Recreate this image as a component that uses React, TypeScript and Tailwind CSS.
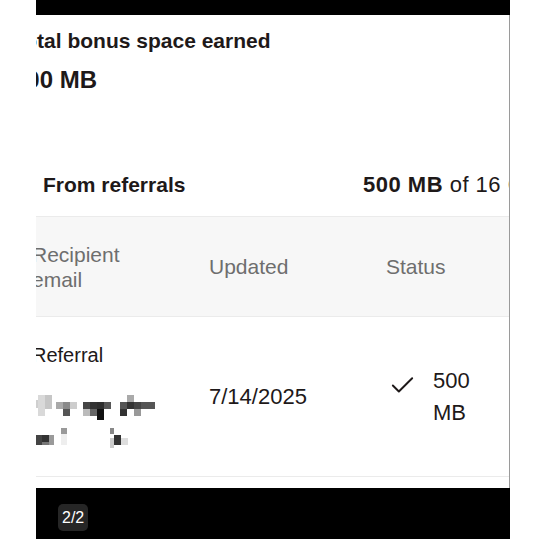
import { Check } from "lucide-react"

const font = { fontFamily: '"Liberation Sans", Arial, sans-serif' }

// pixelated (redacted) email, drawn as mosaic blocks
const blocks: [number, number, number, number, string][] = [
  [2, 8, 4, 8, "#cfcfcf"],
  [6, 3, 7, 21, "#d9d9d9"],
  [13, 3, 7, 14, "#c6c6c6"],
  [24, 10, 7, 7, "#a9a9a9"],
  [31, 10, 7, 7, "#8a8a8a"],
  [31, 17, 7, 7, "#555"],
  [38, 10, 7, 7, "#cdcdcd"],
  [51, 10, 7, 7, "#454545"],
  [58, 10, 7, 7, "#333"],
  [65, 10, 7, 7, "#2e2e2e"],
  [72, 10, 7, 7, "#575757"],
  [51, 17, 7, 7, "#bbb"],
  [58, 17, 7, 7, "#666"],
  [65, 17, 7, 11, "#111"],
  [88, 10, 7, 14, "#555"],
  [95, 3, 7, 7, "#aaa"],
  [95, 10, 7, 7, "#333"],
  [102, 10, 7, 7, "#444"],
  [109, 10, 14, 7, "#555"],
  [88, 17, 7, 7, "#333"],
  [102, 17, 7, 7, "#999"],
  [3, 43, 7, 10, "#444"],
  [10, 43, 7, 7, "#333"],
  [10, 50, 7, 3, "#777"],
  [17, 43, 5, 10, "#9a9a9a"],
  [29, 36, 6, 6, "#999"],
  [29, 42, 6, 11, "#eee"],
  [78, 36, 4, 6, "#888"],
  [82, 43, 7, 10, "#333"],
  [78, 46, 4, 10, "#ccc"],
  [89, 46, 7, 7, "#ddd"],
]

function Mosaic() {
  return (
    <svg width="130" height="60" viewBox="0 0 130 60" className="block blur-[0.5px]">
      {blocks.map(([x, y, w, h, c], i) => (
        <rect key={i} x={x} y={y} width={w} height={h} fill={c} />
      ))}
    </svg>
  )
}

export default function App() {
  return (
    <div className="w-[539px] h-[539px] bg-white flex overflow-hidden" style={font}>
      <div className="w-[36px] shrink-0" />
      <div className="w-[474px] shrink-0 flex flex-col">
        <div className="h-[15px] bg-black shrink-0" />
        <div className="flex-1 border-r border-[#9a9a9a] overflow-hidden text-[#1e1919]">
          <div className="ml-[-23px] w-[530px] pt-[12px]">
            <div className="text-[21px] font-bold leading-[28px] whitespace-nowrap">Total bonus space earned</div>
            <div className="mt-[9px] text-[24px] font-bold leading-[32px] whitespace-nowrap">500 MB</div>

            <div className="mt-[75px] pl-[30px] flex items-center leading-[28px] whitespace-nowrap">
              <div className="w-[320px] text-[21px] font-bold">From referrals</div>
              <div className="text-[22px] tracking-[0.5px]">
                <span className="font-bold">500 MB</span> of 16 GB
              </div>
            </div>

            <div className="mt-[17px] h-[101px] border-y border-[#ebebeb] bg-[#f7f7f7] pl-[19px] flex items-center text-[21px] text-[#6e6e6e] leading-[25px]">
              <div className="w-[177px]">
                Recipient
                <br />
                email
              </div>
              <div className="w-[177px]">Updated</div>
              <div>Status</div>
            </div>

            <div className="h-[160px] border-b border-[#ebebeb] pl-[19px] flex items-center text-[20px]">
              <div className="w-[177px] flex flex-col">
                <div className="leading-[28px]">Referral</div>
                <div className="mt-[23px]">
                  <Mosaic />
                </div>
              </div>
              <div className="w-[177px] text-[22px] leading-[28px]">7/14/2025</div>
              <div className="flex items-start">
                <Check size={29} strokeWidth={1.6} className="ml-[2px] mt-[6px] text-[#1e1919]" />
                <div className="ml-[16px] text-[22px] leading-[32px]">
                  500
                  <br />
                  MB
                </div>
              </div>
            </div>
          </div>
        </div>
        <div className="h-[51px] bg-black shrink-0 pl-[22px] pt-[16px]">
          <span className="inline-block rounded-[5px] bg-[#262626] px-[4px] text-[16px] leading-[27px] text-white">2/2</span>
        </div>
      </div>
      <div className="flex-1" />
    </div>
  )
}
